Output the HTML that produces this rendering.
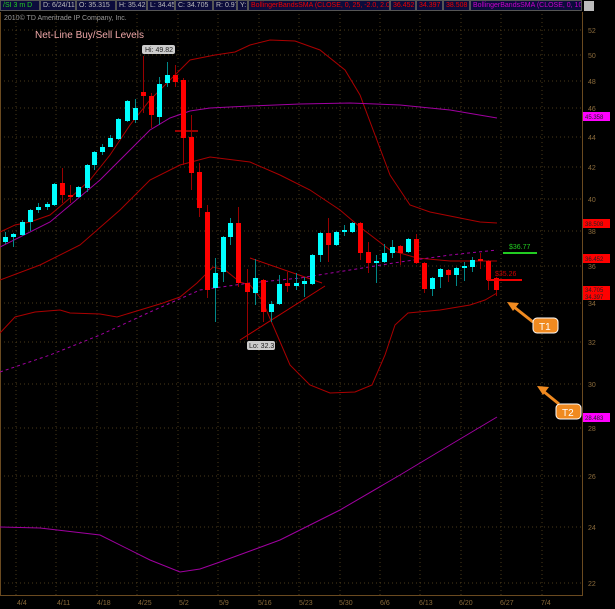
<!DOCTYPE html><html><head><style>
body{margin:0;background:#000;width:615px;height:609px;overflow:hidden;font-family:"Liberation Sans",sans-serif}
.hb{position:absolute;top:0;height:11px;background:#0c0c3c;border:1px solid #555;box-sizing:border-box;font-size:7px;line-height:9px;color:#bbb;padding-left:2px;white-space:nowrap;overflow:hidden}
</style></head><body>
<div class="hb" style="left:0;width:40px;color:#2c2">/SI 3 m D</div>
<div class="hb" style="left:40px;width:36px">D: 6/24/11</div>
<div class="hb" style="left:76px;width:40px">O: 35.315</div>
<div class="hb" style="left:116px;width:31px">H: 35.42</div>
<div class="hb" style="left:147px;width:28px">L: 34.45</div>
<div class="hb" style="left:175px;width:38px">C: 34.705</div>
<div class="hb" style="left:213px;width:24px">R: 0.97</div>
<div class="hb" style="left:237px;width:11px">Y:</div>
<div class="hb" style="left:248px;width:142px;color:#e00">BollingerBandsSMA (CLOSE, 0, 25, -2.0, 2.0)</div>
<div class="hb" style="left:390px;width:26px;color:#e00">36.452</div>
<div class="hb" style="left:416px;width:27px;color:#e00">34.397</div>
<div class="hb" style="left:443px;width:27px;color:#e00">38.508</div>
<div class="hb" style="left:470px;width:112px;color:#c0c">BollingerBandsSMA (CLOSE, 0, 10...</div>
<div style="position:absolute;left:584px;top:1px;width:10px;height:10px;background:#bbb"></div>
<svg width="615" height="609" style="position:absolute;left:0;top:0" font-family="Liberation Sans,sans-serif">
<text x="4" y="20" font-size="7" fill="#999">2010© TD Ameritrade IP Company, Inc.</text>
<text x="35" y="38" font-size="10" fill="#f0a8a8">Net-Line Buy/Sell Levels</text>
<g stroke="#4a3a1a" stroke-dasharray="1,3" stroke-width="1">
<line x1="0" x2="582" y1="30" y2="30"/><line x1="0" x2="582" y1="55" y2="55"/><line x1="0" x2="582" y1="81" y2="81"/><line x1="0" x2="582" y1="108" y2="108"/><line x1="0" x2="582" y1="137" y2="137"/><line x1="0" x2="582" y1="167" y2="167"/><line x1="0" x2="582" y1="199" y2="199"/><line x1="0" x2="582" y1="231" y2="231"/><line x1="0" x2="582" y1="266" y2="266"/><line x1="0" x2="582" y1="303" y2="303"/><line x1="0" x2="582" y1="342" y2="342"/><line x1="0" x2="582" y1="384" y2="384"/><line x1="0" x2="582" y1="428" y2="428"/><line x1="0" x2="582" y1="476" y2="476"/><line x1="0" x2="582" y1="527" y2="527"/><line x1="0" x2="582" y1="583" y2="583"/>
<line y1="14" y2="595" x1="16" x2="16"/><line y1="14" y2="595" x1="56" x2="56"/><line y1="14" y2="595" x1="97" x2="97"/><line y1="14" y2="595" x1="137" x2="137"/><line y1="14" y2="595" x1="178" x2="178"/><line y1="14" y2="595" x1="218" x2="218"/><line y1="14" y2="595" x1="259" x2="259"/><line y1="14" y2="595" x1="299" x2="299"/><line y1="14" y2="595" x1="340" x2="340"/><line y1="14" y2="595" x1="380" x2="380"/><line y1="14" y2="595" x1="420" x2="420"/><line y1="14" y2="595" x1="461" x2="461"/><line y1="14" y2="595" x1="501" x2="501"/><line y1="14" y2="595" x1="542" x2="542"/>
</g>
<g stroke="#6a4a20" fill="none"><line x1="582.5" y1="12" x2="582.5" y2="596"/><line x1="0" y1="595.5" x2="583" y2="595.5"/><line x1="0.5" y1="12" x2="0.5" y2="596"/></g>
<g fill="#8a6a3a" font-size="7">
<text x="588" y="33">52</text><text x="588" y="58">50</text><text x="588" y="84">48</text><text x="588" y="111">46</text><text x="588" y="140">44</text><text x="588" y="170">42</text><text x="588" y="202">40</text><text x="588" y="234">38</text><text x="588" y="269">36</text><text x="588" y="306">34</text><text x="588" y="345">32</text><text x="588" y="387">30</text><text x="588" y="431">28</text><text x="588" y="479">26</text><text x="588" y="530">24</text><text x="588" y="586">22</text>
<text x="17" y="605">4/4</text><text x="57" y="605">4/11</text><text x="97" y="605">4/18</text><text x="138" y="605">4/25</text><text x="179" y="605">5/2</text><text x="219" y="605">5/9</text><text x="258" y="605">5/16</text><text x="299" y="605">5/23</text><text x="339" y="605">5/30</text><text x="380" y="605">6/6</text><text x="419" y="605">6/13</text><text x="459" y="605">6/20</text><text x="500" y="605">6/27</text><text x="541" y="605">7/4</text>
</g>
<g fill="none" stroke-width="1">
<polyline stroke="#a00" points="0,232 15,225 30,222 50,215 70,198 90,180 110,155 130,125 150,100 170,80 190,60 215,55 235,52 250,45 270,40 295,41 320,50 345,70 360,95 375,135 390,175 400,190 410,205 430,212 460,218 480,222 497,223"/>
<polyline stroke="#a00" points="0,280 40,265 80,245 120,210 150,180 180,165 210,157 250,162 280,175 310,190 340,210 360,227 390,250 417,258 450,261 497,261"/>
<polyline stroke="#a00" points="0,333 15,317 35,312 60,310 70,313 100,314 117,317 140,310 163,303 180,297 197,283 213,267 225,270 240,282 250,285 262,300 275,330 290,365 310,385 330,393 355,392 372,385 385,355 395,325 408,313 440,310 470,305 485,300 497,293"/>
<polyline stroke="#a000a0" points="0,247 50,222 100,180 130,150 150,130 170,118 190,111 210,108 250,106 300,104 350,103 400,105 450,110 497,118"/>
<polyline stroke="#a000a0" stroke-dasharray="3,3" points="0,372 50,355 100,335 150,312 200,290 250,283 300,278 350,270 400,262 450,255 497,250"/>
<polyline stroke="#a000a0" points="0,527 40,528 100,535 150,560 180,572 200,569 220,562 280,540 340,510 400,475 450,445 497,417"/>
<line stroke="#b00" x1="250" y1="258" x2="322" y2="283"/><line stroke="#b00" x1="240" y1="340" x2="325" y2="286"/>
<line stroke="#c00" x1="175" y1="131" x2="198" y2="131" stroke-width="1.5"/>
</g>
<g id="c" stroke-width="1"></g>
<line x1="503" y1="253" x2="537" y2="253" stroke="#2c2" stroke-width="2"/><text x="509" y="249" font-size="7" fill="#2c2">$36.77</text>
<line x1="487" y1="280" x2="522" y2="280" stroke="#e00" stroke-width="2"/><text x="495" y="276" font-size="7" fill="#c00">$35.26</text>
<rect x="142" y="45" width="33" height="9" rx="2" fill="#ccc"/><text x="145" y="52" font-size="7" fill="#222">Hi: 49.82</text>
<rect x="247" y="341" width="28" height="9" rx="2" fill="#ccc"/><text x="249" y="348" font-size="7" fill="#222">Lo: 32.3</text>
<g fill="#222" font-size="6">
<rect x="583" y="112" width="27" height="9" fill="#f0f"/><text x="585" y="119">45.358</text>
<rect x="583" y="219" width="27" height="9" fill="#f00"/><text x="585" y="226">38.508</text>
<rect x="583" y="254" width="27" height="9" fill="#f00"/><text x="585" y="261">36.452</text>
<rect x="583" y="286" width="27" height="14" fill="#f00"/><text x="585" y="292">34.705</text><text x="585" y="299">34.397</text>
<rect x="583" y="413" width="27" height="9" fill="#f0f"/><text x="585" y="420">28.483</text>
</g>
<g stroke="#f08a20" stroke-width="3" fill="#f08a20">
<line x1="514" y1="307" x2="533" y2="322"/><polygon points="507,302 519,303 513,311" stroke="none"/>
<line x1="543" y1="391" x2="559" y2="404"/><polygon points="537,386 549,387 543,395" stroke="none"/>
</g>
<rect x="533" y="318" width="25" height="15" rx="4" fill="#f08a20" stroke="#fff" stroke-width="1"/><text x="539" y="330" font-size="10" fill="#fff">T1</text>
<rect x="556" y="404" width="25" height="15" rx="4" fill="#f08a20" stroke="#fff" stroke-width="1"/><text x="562" y="416" font-size="10" fill="#fff">T2</text>
</svg>
<script>
var d=[[5,'c',237,242,232,244],[13,'c',234,237,233,247],[22,'c',222,235,220,236],[30,'c',210,222,209,231],[38,'c',207,210,203,213],[47,'c',204,207,202,210],[54,'c',184,205,183,206],[62,'r',183,195,168,203],[70,'r',195,197,185,203],[78,'c',187,197,186,198],[87,'c',165,188,164,192],[94,'c',152,165,151,170],[102,'c',147,152,144,155],[110,'c',138,147,135,147],[118,'c',119,139,118,140],[127,'c',101,121,100,122],[135,'c',108,120,99,123],[143,'r',92,96,56,113],[151,'r',96,115,93,128],[159,'c',84,117,77,125],[167,'c',75,83,62,87],[175,'r',75,82,65,87],[183,'r',80,138,78,165],[191,'r',137,173,115,190],[199,'r',172,208,163,217],[207,'r',212,290,205,298],[215,'c',273,288,258,322],[223,'c',237,272,236,282],[230,'c',223,237,218,245],[238,'r',223,283,207,287],[247,'r',283,292,269,340],[255,'c',278,293,259,305],[263,'r',280,312,279,322],[271,'c',304,312,301,322],[279,'c',284,304,275,305],[287,'r',283,286,272,292],[296,'c',283,286,273,290],[304,'c',281,284,277,297],[312,'c',255,284,254,285],[320,'c',233,255,232,262],[328,'r',233,245,218,262],[336,'c',232,245,231,246],[344,'c',230,232,225,236],[352,'c',223,232,222,233],[360,'r',223,253,222,260],[368,'r',252,263,242,273],[376,'c',261,262,255,283],[384,'c',253,262,244,263],[392,'c',247,253,240,258],[400,'r',246,253,245,265],[408,'c',239,252,238,253],[416,'r',239,263,234,264],[424,'r',263,289,262,293],[432,'c',278,289,277,296],[440,'c',269,277,268,288],[448,'r',270,275,269,282],[456,'c',268,275,267,286],[464,'c',266,267,262,281],[472,'c',260,267,257,272],[480,'r',259,261,253,269],[488,'r',261,280,260,290],[496,'r',278,290,277,296]];
var s='';d.forEach(function(a){var col=a[1]=='c'?'#0ff':'#f00',wc=a[1]=='c'?'#088':'#900';s+='<line x1="'+(a[0]+.5)+'" x2="'+(a[0]+.5)+'" y1="'+a[4]+'" y2="'+a[5]+'" stroke="'+wc+'"/><rect x="'+(a[0]-2)+'" y="'+a[2]+'" width="5" height="'+Math.max(2,a[3]-a[2])+'" fill="'+col+'"/>';});
document.getElementById('c').innerHTML=s;
</script>
</body></html>
